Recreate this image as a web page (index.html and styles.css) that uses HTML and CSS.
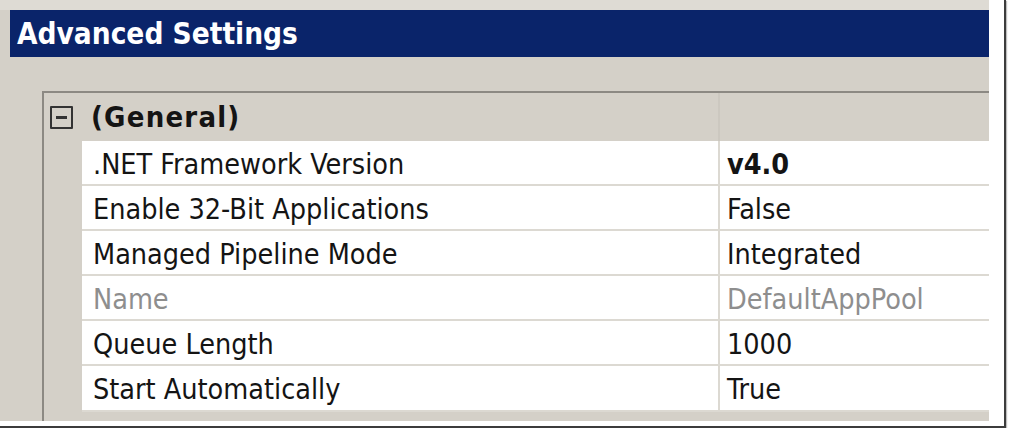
FILE: index.html
```html
<!DOCTYPE html>
<html lang="en">
<head>
    <meta charset="UTF-8">
    <title>Advanced Settings</title>
    <link rel="stylesheet" href="styles.css">
</head>
<body>
    <div class="frame">
        <div class="window">
            <div class="titlebar">Advanced Settings</div>
            <div class="grid">
                <div class="category">
                    <span class="toggle"></span>
                    <span class="category-name">(General)</span>
                </div>
                <div class="row">
                    <div class="name">.NET Framework Version</div>
                    <div class="value bold">v4.0</div>
                </div>
                <div class="row">
                    <div class="name">Enable 32-Bit Applications</div>
                    <div class="value">False</div>
                </div>
                <div class="row">
                    <div class="name">Managed Pipeline Mode</div>
                    <div class="value">Integrated</div>
                </div>
                <div class="row disabled">
                    <div class="name">Name</div>
                    <div class="value">DefaultAppPool</div>
                </div>
                <div class="row">
                    <div class="name">Queue Length</div>
                    <div class="value">1000</div>
                </div>
                <div class="row last">
                    <div class="name">Start Automatically</div>
                    <div class="value">True</div>
                </div>
            </div>
        </div>
    </div>
</body>
</html>
```

FILE: styles.css
```css
body {
    margin: 0;
    background: #fff;
    font-family: "DejaVu Sans Condensed", "DejaVu Sans", sans-serif;
    color: #141414;
}
.frame {
    width: 1004px;
    height: 426px;
    border-right: 2px solid #3c3c3c;
    border-bottom: 2px solid #3c3c3c;
    box-shadow: 1px 1px 1px rgba(0, 0, 0, 0.25);
}
.window {
    width: 989px;
    height: 421px;
    background: #d4d0c8;
    border-top: 10px solid #dedbd4;
    box-sizing: border-box;
    display: flex;
    flex-direction: column;
    overflow: hidden;
}
.titlebar {
    margin-left: 10px;
    height: 47px;
    background: #0a246a;
    color: #fff;
    font-weight: bold;
    font-size: 29.5px;
    line-height: 48px;
    padding-left: 7px;
}
.grid {
    flex: 1;
    margin-top: 34px;
    margin-left: 42px;
    border-top: 2px solid #8c8983;
    border-left: 2px solid #8c8983;
    background: #d4d0c8;
}
.category {
    height: 48px;
    display: flex;
    align-items: center;
    background: linear-gradient(to right, #d4d0c8 674px, #ccc8c0 674px, #ccc8c0 676px, #d4d0c8 676px);
}
.toggle {
    position: relative;
    width: 19px;
    height: 19px;
    margin-left: 6px;
    border: 2px solid #333;
    border-radius: 1px;
}
.toggle::after {
    content: "";
    position: absolute;
    left: 4px;
    right: 4px;
    top: 8px;
    height: 3px;
    background: #333;
}
.category-name {
    margin-left: 18px;
    font-weight: bold;
    font-size: 29px;
    letter-spacing: 1.2px;
}
.row {
    display: flex;
    height: 38px;
    padding-top: 5px;
    margin-left: 38px;
    background: #fff;
    border-bottom: 2px solid #dcd9d2;
    font-size: 28.5px;
    line-height: 38px;
}
.row.last {
    height: 39px;
}
.name {
    width: 625px;
    margin-top: -5px;
    padding-top: 5px;
    padding-left: 11px;
    border-right: 2px solid #dcd9d2;
    white-space: nowrap;
}
.value {
    flex: 1;
    padding-left: 7px;
    white-space: nowrap;
}
.bold {
    font-weight: bold;
}
.disabled {
    color: #8e8e8e;
}
```
